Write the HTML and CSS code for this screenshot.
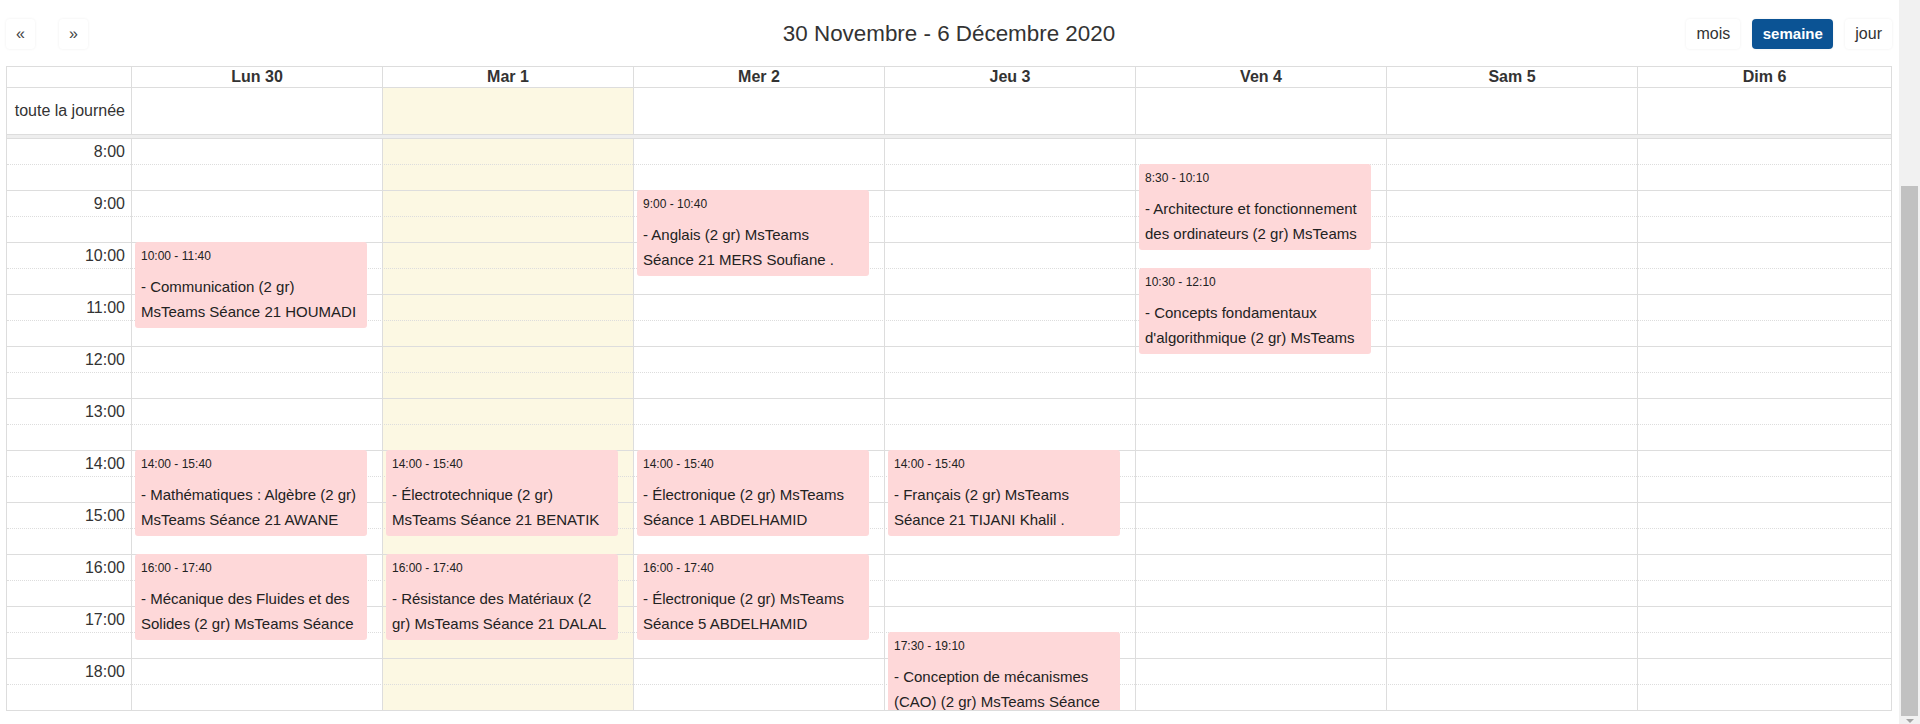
FILE: index.html
```html
<!DOCTYPE html>
<html lang="fr">
<head>
<meta charset="utf-8">
<title>Calendrier</title>
<link rel="stylesheet" href="styles.css">
</head>
<body>
<div class="app">
  <div class="toolbar">
    <div class="tb-left">
      <span class="btn btn-nav">«</span>
      <span class="btn btn-nav">»</span>
    </div>
    <h2 class="title">30 Novembre - 6 Décembre 2020</h2>
    <div class="tb-right">
      <span class="btn">mois</span>
      <span class="btn btn-active">semaine</span>
      <span class="btn">jour</span>
    </div>
  </div>

  <div class="cal">
    <div class="row-grid head">
      <div class="cell axis"></div>
      <div class="cell day">Lun 30</div>
      <div class="cell day">Mar 1</div>
      <div class="cell day">Mer 2</div>
      <div class="cell day">Jeu 3</div>
      <div class="cell day">Ven 4</div>
      <div class="cell day">Sam 5</div>
      <div class="cell day">Dim 6</div>
    </div>
    <div class="row-grid allday">
      <div class="cell axis allday-label">toute la journée</div>
      <div class="cell day"></div>
      <div class="cell day today"></div>
      <div class="cell day"></div>
      <div class="cell day"></div>
      <div class="cell day"></div>
      <div class="cell day"></div>
      <div class="cell day"></div>
    </div>
    <div class="divider"></div>

    <div class="tg-body">
      <div class="row-grid layer bg-cols">
        <div class="axis"></div>
        <div class="day"></div>
        <div class="day today"></div>
        <div class="day"></div>
        <div class="day"></div>
        <div class="day"></div>
        <div class="day"></div>
        <div class="day"></div>
      </div>

      <div class="layer slats">
        <div class="slat hour"><span class="time-label">8:00</span></div>
        <div class="slat half"></div>
        <div class="slat hour"><span class="time-label">9:00</span></div>
        <div class="slat half"></div>
        <div class="slat hour"><span class="time-label">10:00</span></div>
        <div class="slat half"></div>
        <div class="slat hour"><span class="time-label">11:00</span></div>
        <div class="slat half"></div>
        <div class="slat hour"><span class="time-label">12:00</span></div>
        <div class="slat half"></div>
        <div class="slat hour"><span class="time-label">13:00</span></div>
        <div class="slat half"></div>
        <div class="slat hour"><span class="time-label">14:00</span></div>
        <div class="slat half"></div>
        <div class="slat hour"><span class="time-label">15:00</span></div>
        <div class="slat half"></div>
        <div class="slat hour"><span class="time-label">16:00</span></div>
        <div class="slat half"></div>
        <div class="slat hour"><span class="time-label">17:00</span></div>
        <div class="slat half"></div>
        <div class="slat hour"><span class="time-label">18:00</span></div>
        <div class="slat half"></div>
      </div>

      <div class="row-grid layer ev-layer">
        <div class="axis"></div>
        <div class="ev-col">
          <div class="ev" style="top:104px;height:86px">
            <div class="ev-time">10:00 - 11:40</div>
            <div class="ev-title">- Communication (2 gr) MsTeams Séance 21 HOUMADI</div>
          </div>
          <div class="ev" style="top:312px;height:86px">
            <div class="ev-time">14:00 - 15:40</div>
            <div class="ev-title">- Mathématiques : Algèbre (2 gr) MsTeams Séance 21 AWANE</div>
          </div>
          <div class="ev" style="top:416px;height:86px">
            <div class="ev-time">16:00 - 17:40</div>
            <div class="ev-title">- Mécanique des Fluides et des Solides (2 gr) MsTeams Séance 21</div>
          </div>
        </div>
        <div class="ev-col">
          <div class="ev" style="top:312px;height:86px">
            <div class="ev-time">14:00 - 15:40</div>
            <div class="ev-title">- Électrotechnique (2 gr) MsTeams Séance 21 BENATIK</div>
          </div>
          <div class="ev" style="top:416px;height:86px">
            <div class="ev-time">16:00 - 17:40</div>
            <div class="ev-title">- Résistance des Matériaux (2 gr) MsTeams Séance 21 DALAL</div>
          </div>
        </div>
        <div class="ev-col">
          <div class="ev" style="top:52px;height:86px">
            <div class="ev-time">9:00 - 10:40</div>
            <div class="ev-title">- Anglais (2 gr) MsTeams Séance 21 MERS Soufiane .</div>
          </div>
          <div class="ev" style="top:312px;height:86px">
            <div class="ev-time">14:00 - 15:40</div>
            <div class="ev-title">- Électronique (2 gr) MsTeams Séance 1 ABDELHAMID</div>
          </div>
          <div class="ev" style="top:416px;height:86px">
            <div class="ev-time">16:00 - 17:40</div>
            <div class="ev-title">- Électronique (2 gr) MsTeams Séance 5 ABDELHAMID</div>
          </div>
        </div>
        <div class="ev-col">
          <div class="ev" style="top:312px;height:86px">
            <div class="ev-time">14:00 - 15:40</div>
            <div class="ev-title">- Français (2 gr) MsTeams Séance 21 TIJANI Khalil .</div>
          </div>
          <div class="ev" style="top:494px;height:86px">
            <div class="ev-time">17:30 - 19:10</div>
            <div class="ev-title">- Conception de mécanismes (CAO) (2 gr) MsTeams Séance 21</div>
          </div>
        </div>
        <div class="ev-col">
          <div class="ev" style="top:26px;height:86px">
            <div class="ev-time">8:30 - 10:10</div>
            <div class="ev-title">- Architecture et fonctionnement des ordinateurs (2 gr) MsTeams Séance 21</div>
          </div>
          <div class="ev" style="top:130px;height:86px">
            <div class="ev-time">10:30 - 12:10</div>
            <div class="ev-title">- Concepts fondamentaux d'algorithmique (2 gr) MsTeams Séance 21</div>
          </div>
        </div>
        <div class="ev-col"></div>
        <div class="ev-col"></div>
      </div>
    </div>
  </div>
</div>
<div class="sb">
  <div class="sb-thumb"></div>
  <div class="sb-arrow"></div>
</div>
</body>
</html>
```

FILE: styles.css
```css
* { box-sizing: border-box; }

html, body {
  margin: 0;
  height: 100%;
  overflow: hidden;
}

body {
  font-family: "Liberation Sans", Arial, sans-serif;
  color: #333;
  background: #fff;
  display: flex;
}

.app {
  flex: 1;
  min-width: 0;
  padding: 19px 7px 0 6px;
}

/* Toolbar */
.toolbar {
  display: grid;
  grid-template-columns: 1fr auto 1fr;
  align-items: center;
  height: 30px;
  margin-bottom: 17px;
}

.tb-left {
  display: flex;
  gap: 24px;
}

.tb-right {
  display: flex;
  gap: 12px;
  justify-content: flex-end;
}

.btn {
  display: inline-block;
  height: 30px;
  padding: 0 10px;
  border-radius: 4px;
  background: #fff;
  box-shadow: 0 0 3px rgba(0, 0, 0, 0.07);
  font-size: 16px;
  line-height: 30px;
  color: #333;
}

.btn-nav {
  width: 29px;
  padding: 0;
  text-align: center;
  color: #444;
}

.btn-active {
  background: #0b5394;
  color: #fff;
  font-weight: bold;
  font-size: 15px;
  padding: 0 10.5px;
}

.title {
  margin: 0;
  font-size: 22.4px;
  font-weight: normal;
  color: #333;
  line-height: 30px;
}

/* Calendar */
.cal {
  border: 1px solid #ddd;
}

.row-grid {
  display: grid;
  grid-template-columns: 124px repeat(6, 251px) minmax(0, 1fr);
}

.day {
  border-left: 1px solid #ddd;
}

.today {
  background: #fcf8e3;
}

.head {
  border-bottom: 1px solid #ddd;
}

.head .cell {
  font-weight: bold;
  font-size: 16px;
  line-height: 20px;
  height: 20px;
  text-align: center;
}

.allday {
  height: 46px;
}

.allday-label {
  font-size: 16px;
  line-height: 46px;
  text-align: right;
  padding-right: 6px;
  white-space: nowrap;
}

.divider {
  height: 4px;
  border-top: 1px solid #ddd;
  background: #eee;
}

/* Time grid body */
.tg-body {
  display: grid;
  height: 572px;
  overflow: hidden;
}

.layer {
  grid-area: 1 / 1;
}

.slat {
  height: 26px;
}

.slat.hour {
  border-top: 1px solid #ddd;
}

.slat.half {
  border-top: 1px dotted #ddd;
}

.time-label {
  display: block;
  width: 124px;
  padding-right: 6px;
  text-align: right;
  font-size: 16px;
  line-height: 25px;
  color: #333;
}

.ev-col {
  position: relative;
  border-left: 1px solid transparent;
}

.ev {
  position: absolute;
  left: 3px;
  right: 15px;
  background: #fed8d9;
  border-radius: 3px;
  padding: 4px 6px;
  overflow: hidden;
  color: #222;
}

.ev-time {
  font-size: 12px;
  line-height: 20px;
  white-space: nowrap;
}

.ev-title {
  margin-top: 8px;
  font-size: 15px;
  line-height: 25px;
}

/* Page scrollbar */
.sb {
  width: 21px;
  flex: none;
  height: 724px;
  background: #f1f1f1;
  padding: 186px 2px 0;
  display: flex;
  flex-direction: column;
  align-items: center;
}

.sb-thumb {
  width: 17px;
  height: 530px;
  background: #c1c1c1;
}

.sb-arrow {
  margin-top: 3px;
  width: 0;
  height: 0;
  border-left: 4px solid transparent;
  border-right: 4px solid transparent;
  border-top: 4px solid #a3a3a3;
}
```
